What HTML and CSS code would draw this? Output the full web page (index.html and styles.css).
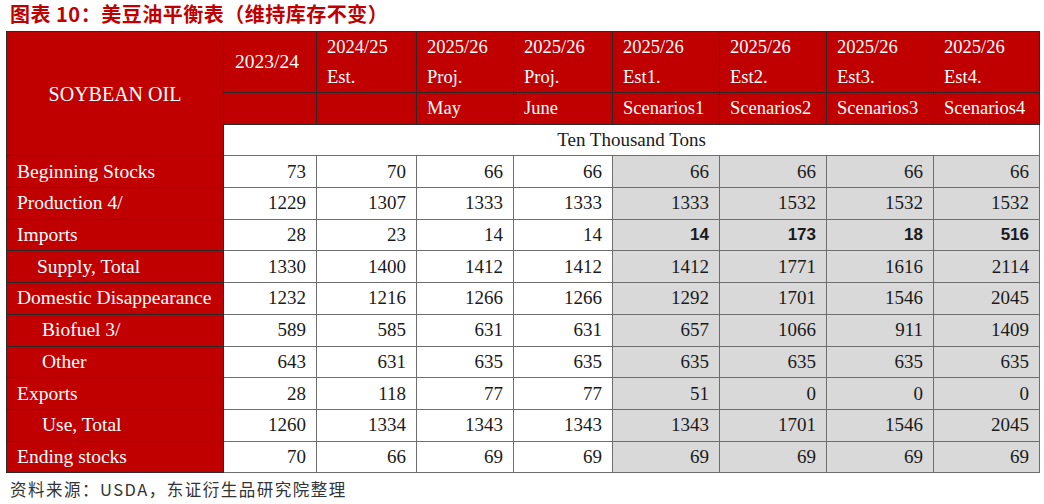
FILE: index.html
```html
<!DOCTYPE html>
<html>
<head>
<meta charset="utf-8">
<link rel="stylesheet" href="styles.css">
</head>
<body>
<div class="page">
  <div class="title">图表 10：美豆油平衡表（维持库存不变）</div>
  <table class="bal">
    <colgroup>
      <col class="c-label"><col class="c1"><col class="c2"><col class="c3"><col class="c4"><col class="c5"><col class="c6"><col class="c7"><col class="c8">
    </colgroup>
    <tr class="h1">
      <th class="corner" rowspan="3">SOYBEAN OIL</th>
      <th class="yr">2023/24</th>
      <th>2024/25<br>Est.</th>
      <th>2025/26<br>Proj.</th>
      <th>2025/26<br>Proj.</th>
      <th>2025/26<br>Est1.</th>
      <th>2025/26<br>Est2.</th>
      <th>2025/26<br>Est3.</th>
      <th>2025/26<br>Est4.</th>
    </tr>
    <tr class="h2">
      <th></th><th></th><th>May</th><th>June</th><th>Scenarios1</th><th>Scenarios2</th><th>Scenarios3</th><th>Scenarios4</th>
    </tr>
    <tr class="unit">
      <td colspan="8">Ten Thousand Tons</td>
    </tr>
    <tr><th class="lab">Beginning Stocks</th><td>73</td><td>70</td><td>66</td><td>66</td><td class="g">66</td><td class="g">66</td><td class="g">66</td><td class="g">66</td></tr>
    <tr><th class="lab">Production 4/</th><td>1229</td><td>1307</td><td>1333</td><td>1333</td><td class="g">1333</td><td class="g">1532</td><td class="g">1532</td><td class="g">1532</td></tr>
    <tr><th class="lab">Imports</th><td>28</td><td>23</td><td>14</td><td>14</td><td class="g b">14</td><td class="g b">173</td><td class="g b">18</td><td class="g b">516</td></tr>
    <tr><th class="lab in1">Supply, Total</th><td>1330</td><td>1400</td><td>1412</td><td>1412</td><td class="g">1412</td><td class="g">1771</td><td class="g">1616</td><td class="g">2114</td></tr>
    <tr><th class="lab">Domestic Disappearance</th><td>1232</td><td>1216</td><td>1266</td><td>1266</td><td class="g">1292</td><td class="g">1701</td><td class="g">1546</td><td class="g">2045</td></tr>
    <tr><th class="lab in2">Biofuel 3/</th><td>589</td><td>585</td><td>631</td><td>631</td><td class="g">657</td><td class="g">1066</td><td class="g">911</td><td class="g">1409</td></tr>
    <tr><th class="lab in2">Other</th><td>643</td><td>631</td><td>635</td><td>635</td><td class="g">635</td><td class="g">635</td><td class="g">635</td><td class="g">635</td></tr>
    <tr><th class="lab">Exports</th><td>28</td><td>118</td><td>77</td><td>77</td><td class="g">51</td><td class="g">0</td><td class="g">0</td><td class="g">0</td></tr>
    <tr><th class="lab in2">Use, Total</th><td>1260</td><td>1334</td><td>1343</td><td>1343</td><td class="g">1343</td><td class="g">1701</td><td class="g">1546</td><td class="g">2045</td></tr>
    <tr><th class="lab">Ending stocks</th><td>70</td><td>66</td><td>69</td><td>69</td><td class="g">69</td><td class="g">69</td><td class="g">69</td><td class="g">69</td></tr>
  </table>
  <div class="src">资料来源：USDA，东证衍生品研究院整理</div>
</div>
</body>
</html>
```

FILE: styles.css
```css
html, body {
  margin: 0;
  padding: 0;
  background: #ffffff;
}
.page {
  width: 1044px;
  height: 504px;
  overflow: hidden;
  font-family: "Liberation Serif", "Noto Sans CJK SC", serif;
}
.title {
  height: 31px;
  padding-left: 10px;
  font-family: "Noto Sans CJK SC", serif;
  font-weight: 700;
  font-size: 20px;
  line-height: 28px;
  color: #c00000;
  letter-spacing: 0.5px;
}
.bal {
  margin-left: 6px;
  border-collapse: collapse;
  table-layout: fixed;
  width: 1033px;
  font-size: 19px;
  color: #1a1a1a;
}
.c-label { width: 217px; }
.c1 { width: 93px; }
.c2 { width: 100px; }
.c3 { width: 97px; }
.c4 { width: 99px; }
.c5 { width: 107px; }
.c6 { width: 107px; }
.c7 { width: 107px; }
.c8 { width: 106px; }
.bal th, .bal td {
  border: 1px solid #4a4a4a;
  padding: 0;
  overflow: hidden;
  white-space: nowrap;
}
.bal th {
  background: #c00000;
  color: #ffffff;
  font-weight: 400;
  text-align: left;
  border-color: #2a2a2a;
}
.h1 { height: 61px; }
.h1 th {
  padding-left: 10px;
  line-height: 30px;
  vertical-align: middle;
  font-size: 18.5px;
}
.h1 th.yr { padding-left: 11px; font-size: 19.5px; }
.h1 th.corner {
  text-align: center;
  padding-left: 0;
  font-size: 20px;
}
.h2 { height: 31px; }
.h2 th { padding-left: 10px; line-height: 28px; font-size: 18.5px; }
.unit { height: 32px; }
.bal .unit td {
  text-align: center;
  padding-right: 0;
  background: #ffffff;
}
.bal tr { height: 31.7px; }
.bal td {
  text-align: right;
  padding-right: 10px;
  line-height: 30px;
  background: #ffffff;
  border-color: #6e6e6e;
}
.bal td.g { background: #d9d9d9; }
.bal td.b {
  font-family: "Liberation Sans", sans-serif;
  font-weight: 700;
  font-size: 17px;
}
.bal th.lab {
  padding-left: 10px;
  line-height: 30px;
  font-size: 19.5px;
}
.bal th.in1 { padding-left: 30px; }
.bal th.in2 { padding-left: 35px; }
.src {
  padding-left: 10px;
  margin-top: 4px;
  font-family: "Noto Sans CJK SC", serif;
  font-size: 16.5px;
  color: #333333;
  letter-spacing: 1.5px;
}
```
